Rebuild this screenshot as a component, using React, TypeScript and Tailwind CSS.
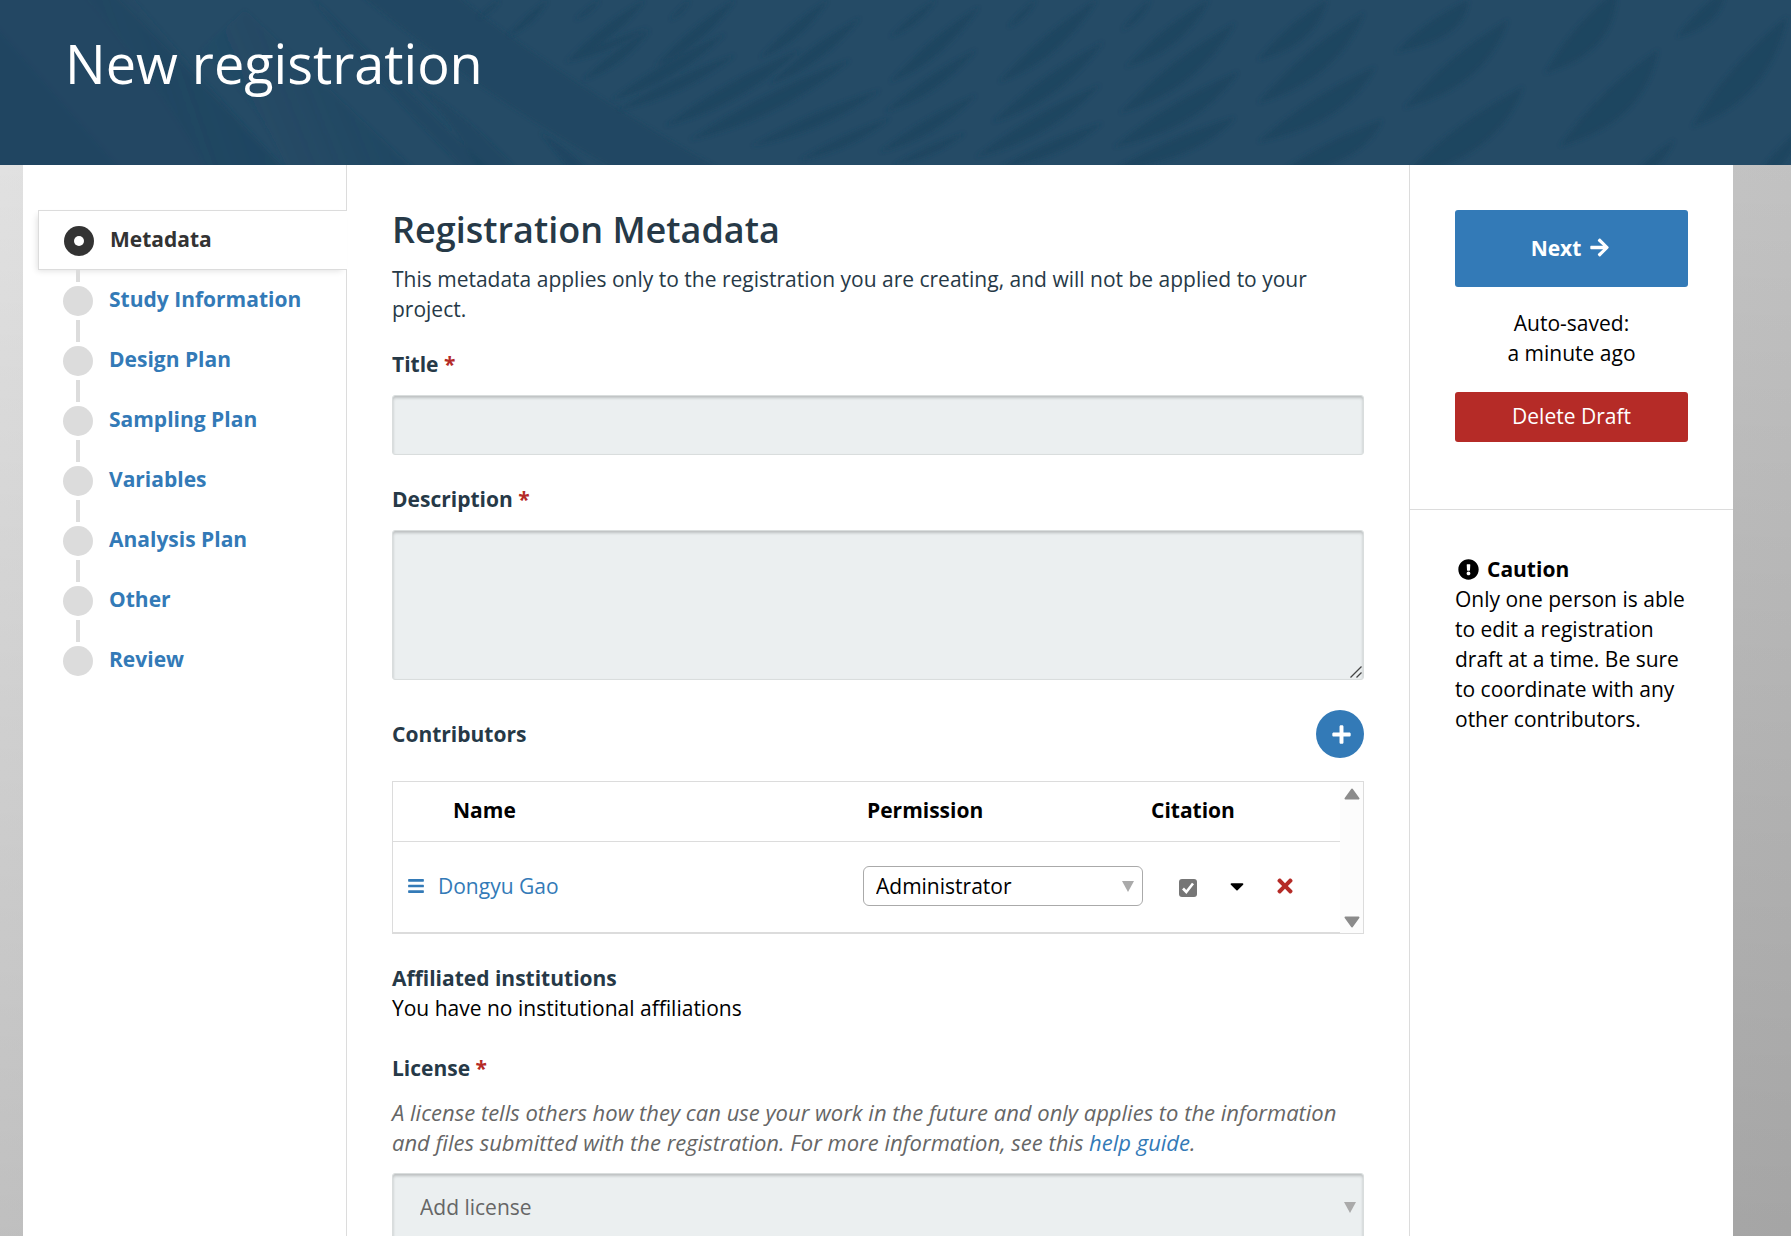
import { FaArrowRight, FaPlus, FaBars, FaTimes, FaExclamationCircle, FaCaretDown } from "react-icons/fa";

type Leaf = [number, number, number, number, number];

/* Leaf shapes of the banner: top tip, bottom tip, thickness. */
const leaves: Leaf[] = [
  [500, 0, 478, 18, 3], [548, 0, 508, 36, 5], [600, 0, 575, 20, 3], [648, 28, 565, 62, 4],
  [645, 0, 568, 60, 6], [650, 30, 583, 80, 7], [690, 0, 670, 20, 3], [735, 0, 655, 66, 6],
  [725, 34, 612, 100, 7], [735, 55, 618, 110, 8], [828, 0, 760, 58, 7], [860, 18, 770, 84, 7],
  [800, 50, 665, 126, 9], [850, 60, 690, 140, 9], [880, 90, 752, 146, 9], [890, 118, 800, 160, 9],
  [936, 0, 890, 37, 4], [979, 7, 890, 82, 7], [976, 50, 885, 112, 8], [976, 95, 880, 152, 10],
  [965, 133, 894, 165, 8], [1036, 0, 1008, 27, 4], [1097, 0, 999, 82, 12], [1103, 42, 993, 122, 14],
  [1100, 85, 976, 157, 14], [1102, 123, 1000, 168, 18], [1151, 0, 1122, 30, 4], [1209, 0, 1126, 67, 18],
  [1235, 23, 1120, 113, 22], [1238, 72, 1114, 147, 28], [1235, 117, 1110, 172, 34],
  [1327, 0, 1258, 60, 26], [1364, 13, 1258, 103, 28], [1375, 67, 1258, 142, 34], [1382, 120, 1270, 180, 44],
  [1468, 0, 1396, 52, 38], [1508, 20, 1404, 108, 34], [1523, 87, 1400, 180, 42],
  [1617, -10, 1545, 73, 40], [1658, 50, 1560, 146, 40], [1674, 140, 1630, 180, 12],
  [1725, -10, 1677, 37, 24], [1787, 17, 1692, 127, 34], [1800, 130, 1755, 180, 18],
];

function leafPath([x1, y1, x2, y2, w]: Leaf) {
  const dx = x2 - x1;
  const dy = y2 - y1;
  const sharp = `${x1 + dx * 0.55 - w * 0.1} ${y1 + dy * 0.4}`;
  const full = `${x1 + dx * 0.5 + w * 0.9} ${y1 + dy * 0.75}`;
  return `M${x1} ${y1}Q${sharp} ${x2} ${y2}Q${full} ${x1} ${y1}Z`;
}

function BannerPattern() {
  return (
    <svg className="absolute inset-0 h-full w-full" viewBox="0 0 1791 165" preserveAspectRatio="xMidYMid slice" aria-hidden="true">
      <defs>
        <filter id="soft" x="-5%" y="-5%" width="110%" height="110%">
          <feGaussianBlur stdDeviation="2" />
        </filter>
        <linearGradient id="band" x1="0" y1="0.3" x2="1" y2="0">
          <stop offset="0" stopColor="#1d445f" stopOpacity="0.1" />
          <stop offset="1" stopColor="#1d445f" stopOpacity="0.9" />
        </linearGradient>
      </defs>
      <g filter="url(#soft)">
        <path d="M-10 -10H110L290 175H-10Z" fill="#1d445f" opacity="0.5" />
        <path d="M-10 20L125 175H-10Z" fill="#1d445f" opacity="0.3" />
        <path d="M80 -10H126Q180 55 290 175H210Q150 70 80 -10Z" fill="url(#band)" opacity="0.7" />
        <path d="M245 10Q330 90 420 175H290Q260 100 200 50Z" fill="url(#band)" opacity="0.7" />
        <path d="M310 -5Q400 85 490 170H465Q380 85 310 -5Z" fill="#1d445f" opacity="0.6" />
        <path d="M355 -10H450Q560 80 730 175H625Q480 95 355 -10Z" fill="#1d445f" opacity="0.6" />
        <path d="M410 80Q480 125 520 175H482Q450 115 410 80Z" fill="#1d445f" opacity="0.6" />
        <path d="M540 132Q570 150 588 170H570Z" fill="#1d445f" opacity="0.7" />
      </g>
      <g filter="url(#soft)" fill="#1d445f" opacity="0.8">
        {leaves.map((leaf, i) => (
          <path key={i} d={leafPath(leaf)} />
        ))}
      </g>
    </svg>
  );
}

const steps = ["Study Information", "Design Plan", "Sampling Plan", "Variables", "Analysis Plan", "Other", "Review"];

const field =
  "block w-full rounded-[3px] border border-[#d9dddd] bg-[#ebeff0] shadow-[inset_0_2px_3px_rgba(0,0,0,0.2)] outline-none";

function Required() {
  return <span className="text-[#b52b27]">*</span>;
}

function StepNav() {
  return (
    <nav className="relative border-r border-[#dcdcdc] pt-[45px]" aria-label="Registration steps">
      <ul className="ml-[15px] font-bold">
        <li className="-mr-px flex h-[60px] items-center border border-r-0 border-[#dcdcdc] bg-white pb-[2px] pl-[25px] shadow-[-3px_3px_6px_-2px_rgba(0,0,0,0.12)]">
          <span className="mt-[4px] flex size-[30px] items-center justify-center rounded-full bg-[#333]">
            <span className="size-[10px] rounded-full bg-white" />
          </span>
          <span className="pl-[16px] text-[#333]">Metadata</span>
        </li>
        {steps.map((step, i) => (
          <li key={step} className="relative flex h-[60px] items-center pb-[2px] pl-[25px]">
            <span
              className={
                i === 0
                  ? "absolute top-0 left-[38px] h-[12px] w-[4px] bg-[#dcdcdc]"
                  : "absolute -top-[10px] left-[38px] h-[22px] w-[4px] bg-[#dcdcdc]"
              }
            />
            <span className="mt-[4px] size-[30px] rounded-full bg-[#dcdcdc]" />
            <a href="#" className="pl-[16px] text-[#337ab7]">{step}</a>
          </li>
        ))}
      </ul>
    </nav>
  );
}

function Contributors() {
  return (
    <section>
      <div className="mt-[30px] flex h-[48px] items-center justify-between">
        <h3 className="font-bold text-[#263947]">Contributors</h3>
        <button type="button" aria-label="Add contributor" className="flex size-[48px] items-center justify-center rounded-full bg-[#337ab7] pl-[2px] text-white">
          <FaPlus size={21} />
        </button>
      </div>
      <div className="mt-[23px] flex border border-[#dcdcdc]">
        <div className="min-w-0 flex-1">
          <table className="w-full table-fixed border-collapse text-left text-black">
            <colgroup>
              <col />
              <col className="w-[284px]" />
              <col className="w-[86px]" />
              <col className="w-[114px]" />
            </colgroup>
            <thead>
              <tr className="h-[59px] border-b border-[#dcdcdc]">
                <th className="pb-[2px] pl-[60px]">Name</th>
                <th className="pb-[2px] pl-[11px]">Permission</th>
                <th className="pb-[2px] pl-[11px]">Citation</th>
                <th aria-label="Actions" />
              </tr>
            </thead>
            <tbody>
              <tr className="h-[91px] border-b border-[#dcdcdc]">
                <td className="pb-[2px]">
                  <div className="flex items-center pl-[14px]">
                    <FaBars size={18} className="text-[#337ab7]" />
                    <a href="#" className="pl-[13px] text-[#337ab7]">Dongyu Gao</a>
                  </div>
                </td>
                <td className="pb-[2px]">
                  <div className="relative ml-[7px] w-[280px]">
                    <select aria-label="Permission" className="block h-[40px] w-full appearance-none rounded-[6px] border border-[#aaa] bg-white pl-[12px] text-black">
                      <option>Administrator</option>
                    </select>
                    <svg className="pointer-events-none absolute top-[15px] right-[9px]" width="12" height="11" viewBox="0 0 12 11"><path d="M0 0H12L6 11Z" fill="#aaa" /></svg>
                  </div>
                </td>
                <td className="pb-[2px]">
                  <label className="relative mt-[4px] ml-[39px] block size-[18px]">
                    <input type="checkbox" defaultChecked aria-label="Citation" className="block size-[18px] appearance-none rounded-[3px] bg-[#767676]" />
                    <svg className="pointer-events-none absolute inset-0" viewBox="0 0 18 18"><path d="M4 9.5L7.3 13L14 4.5" fill="none" stroke="#fff" strokeWidth="2.6" /></svg>
                  </label>
                </td>
                <td className="pb-[2px]">
                  <div className="flex items-center">
                    <button type="button" aria-label="More" className="text-black"><FaCaretDown size={22} /></button>
                    <button type="button" aria-label="Remove contributor" className="ml-[26px] text-[#b52b27]"><FaTimes size={22} /></button>
                  </div>
                </td>
              </tr>
            </tbody>
          </table>
        </div>
        <div className="flex w-[23px] flex-col items-center justify-between bg-[#fcfcfc] pt-[6px] pb-[5px]" aria-hidden="true">
          <svg width="16" height="12" viewBox="0 0 16 12"><path d="M8 1.5L14.5 10.5H1.5Z" fill="#8b8b8b" stroke="#8b8b8b" strokeWidth="2" strokeLinejoin="round" /></svg>
          <svg width="16" height="12" viewBox="0 0 16 12"><path d="M8 10.5L14.5 1.5H1.5Z" fill="#8b8b8b" stroke="#8b8b8b" strokeWidth="2" strokeLinejoin="round" /></svg>
        </div>
      </div>
    </section>
  );
}

function MetadataForm() {
  return (
    <main className="min-w-0 px-[45px] pt-[45px]">
      <h2 className="text-[36px] leading-[40px] font-semibold text-[#263947]">Registration Metadata</h2>
      <p className="mt-[14px] text-[#263947]">
        This metadata applies only to the registration you are creating, and will not be applied to your project.
      </p>
      <label htmlFor="title" className="mt-[25px] block font-bold text-[#263947]">Title <Required /></label>
      <input id="title" type="text" className={`${field} mt-[16px] h-[60px]`} />
      <label htmlFor="description" className="mt-[29px] block font-bold text-[#263947]">Description <Required /></label>
      <div className="relative mt-[16px]">
        <textarea id="description" className={`${field} h-[150px] resize-none`} />
        <svg className="pointer-events-none absolute right-[2px] bottom-[2px]" width="12" height="12" viewBox="0 0 12 12" aria-hidden="true">
          <path d="M0.5 11.5L11.5 0.5M6.5 11.5L11.5 6.5" stroke="#444" strokeWidth="1.3" />
        </svg>
      </div>
      <Contributors />
      <section className="mt-[29px]">
        <h3 className="font-bold text-[#263947]">Affiliated institutions</h3>
        <p className="text-black">You have no institutional affiliations</p>
      </section>
      <label htmlFor="license" className="mt-[30px] block font-bold text-[#263947]">License <Required /></label>
      <p className="mt-[14px] text-[22px] text-[#666] italic">
        A license tells others how they can use your work in the future and only applies to the information and files
        submitted with the registration. For more information, see this{" "}
        <a href="#" className="text-[#337ab7]">help guide</a>.
      </p>
      <div className="relative mt-[16px]">
        <select id="license" className={`${field} h-[68px] appearance-none pl-[27px] text-[#666]`}>
          <option>Add license</option>
        </select>
        <svg className="pointer-events-none absolute top-[29px] right-[8px]" width="12" height="11" viewBox="0 0 12 11"><path d="M0 0H12L6 11Z" fill="#aaa" /></svg>
      </div>
    </main>
  );
}

function ActionPanel() {
  return (
    <aside className="border-l border-[#dcdcdc] text-black">
      <div className="border-b border-[#dcdcdc] px-[45px] pt-[45px] pb-[67px]">
        <button type="button" className="flex h-[77px] w-full items-center justify-center gap-[8px] rounded-[3px] bg-[#337ab7] pr-[2px] pb-[2px] font-bold text-white">
          Next <FaArrowRight size={21} />
        </button>
        <p className="mt-[21px] text-center">Auto-saved:<br />a minute ago</p>
        <button type="button" className="mt-[24px] h-[50px] w-full rounded-[3px] bg-[#b52b27] pb-[2px] text-white">Delete Draft</button>
      </div>
      <div className="px-[45px] pt-[44px]">
        <h3 className="flex items-center font-bold">
          <FaExclamationCircle size={21} className="mr-[8px] ml-[3px]" />
          Caution
        </h3>
        <p>Only one person is able to edit a registration draft at a time. Be sure to coordinate with any other contributors.</p>
      </div>
    </aside>
  );
}

export default function App() {
  return (
    <div className="flex h-screen flex-col overflow-hidden bg-[linear-gradient(to_bottom,rgba(0,0,0,0),rgba(0,0,0,0.17)),linear-gradient(to_right,#e6e6e6,#c6c6c6)] font-['Open_Sans',sans-serif] text-[21px] leading-[30px]">
      <header className="relative h-[165px] shrink-0 bg-[#254b66] pt-[33px] pl-[65px]">
        <BannerPattern />
        <h1 className="relative text-[54px] leading-[60px] text-white">New registration</h1>
      </header>
      <div className="mr-[58px] ml-[23px] grid flex-1 grid-cols-[324px_minmax(0,1fr)_324px] bg-white">
        <StepNav />
        <MetadataForm />
        <ActionPanel />
      </div>
    </div>
  );
}
